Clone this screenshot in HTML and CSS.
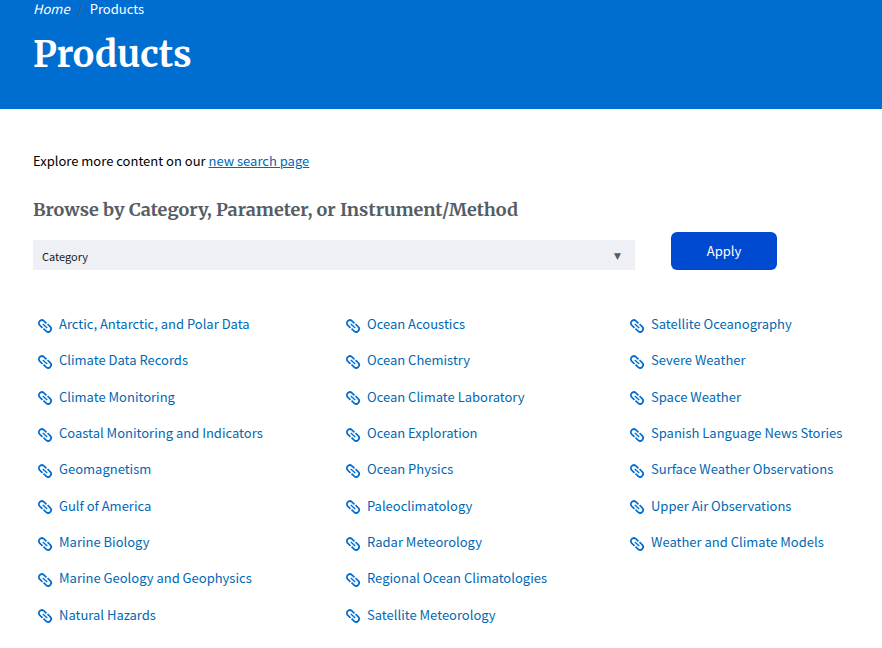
FILE: index.html
```html
<!DOCTYPE html>
<html lang="en">
<head>
<meta charset="utf-8">
<meta name="viewport" content="width=device-width, initial-scale=1">
<title>Products</title>
<link rel="stylesheet" href="styles.css">
</head>
<body>

<!-- link icon, used by every list item -->
<svg class="sprite" aria-hidden="true">
	<symbol id="link" viewBox="0 0 14 14">
		<g transform="rotate(42 7 7)" fill="none" stroke="currentColor" stroke-width="1.7">
			<path d="M6.3 10H2.8A3 3 0 0 1 2.8 4H6.3"/>
			<path d="M7.7 4H11.2A3 3 0 0 1 11.2 10H7.7"/>
			<path d="M4 7H10" stroke-width="1.4"/>
		</g>
	</symbol>
</svg>

<header class="banner">
	<nav class="breadcrumb" aria-label="Breadcrumb">
		<a href="#">Home</a><span class="slash">/</span><span>Products</span>
	</nav>
	<h1>Products</h1>
</header>

<main class="content">
	<p class="explore">Explore more content on our <a href="#">new search page</a></p>

	<h2><label for="browse">Browse by Category, Parameter, or Instrument/Method</label></h2>
	<form class="filter">
		<div class="select">
			<select id="browse">
				<option>Category</option>
				<option>Parameter</option>
				<option>Instrument/Method</option>
			</select>
			<span class="arrow" aria-hidden="true">▼</span>
		</div>
		<button type="button">Apply</button>
	</form>

	<ul class="products">
		<li><svg><use href="#link"/></svg><a href="#">Arctic, Antarctic, and Polar Data</a></li>
		<li><svg><use href="#link"/></svg><a href="#">Climate Data Records</a></li>
		<li><svg><use href="#link"/></svg><a href="#">Climate Monitoring</a></li>
		<li><svg><use href="#link"/></svg><a href="#">Coastal Monitoring and Indicators</a></li>
		<li><svg><use href="#link"/></svg><a href="#">Geomagnetism</a></li>
		<li><svg><use href="#link"/></svg><a href="#">Gulf of America</a></li>
		<li><svg><use href="#link"/></svg><a href="#">Marine Biology</a></li>
		<li><svg><use href="#link"/></svg><a href="#">Marine Geology and Geophysics</a></li>
		<li><svg><use href="#link"/></svg><a href="#">Natural Hazards</a></li>
		<li><svg><use href="#link"/></svg><a href="#">Ocean Acoustics</a></li>
		<li><svg><use href="#link"/></svg><a href="#">Ocean Chemistry</a></li>
		<li><svg><use href="#link"/></svg><a href="#">Ocean Climate Laboratory</a></li>
		<li><svg><use href="#link"/></svg><a href="#">Ocean Exploration</a></li>
		<li><svg><use href="#link"/></svg><a href="#">Ocean Physics</a></li>
		<li><svg><use href="#link"/></svg><a href="#">Paleoclimatology</a></li>
		<li><svg><use href="#link"/></svg><a href="#">Radar Meteorology</a></li>
		<li><svg><use href="#link"/></svg><a href="#">Regional Ocean Climatologies</a></li>
		<li><svg><use href="#link"/></svg><a href="#">Satellite Meteorology</a></li>
		<li><svg><use href="#link"/></svg><a href="#">Satellite Oceanography</a></li>
		<li><svg><use href="#link"/></svg><a href="#">Severe Weather</a></li>
		<li><svg><use href="#link"/></svg><a href="#">Space Weather</a></li>
		<li><svg><use href="#link"/></svg><a href="#">Spanish Language News Stories</a></li>
		<li><svg><use href="#link"/></svg><a href="#">Surface Weather Observations</a></li>
		<li><svg><use href="#link"/></svg><a href="#">Upper Air Observations</a></li>
		<li><svg><use href="#link"/></svg><a href="#">Weather and Climate Models</a></li>
	</ul>
</main>

</body>
</html>
```
FILE: styles.css
```css
*{ box-sizing:border-box; margin:0; padding:0;}
body{ background:#fff; color:#000; font-family:"Source Sans Pro","Noto Sans CJK SC",sans-serif; font-size:13px; line-height:20px;}
a{ color:#0068b3;}
.sprite{ display:none;}

/* banner */
.banner{ background:#006dd1; color:#fff; padding:0 33px 30px;}
.breadcrumb{ line-height:18px;}
.breadcrumb a{ color:#fff; font-style:italic; text-decoration:none;}
.slash{ color:#565c65; margin:0 7px 0 8px;}
h1,h2{ font-family:Merriweather,"Liberation Serif",serif; font-weight:bold;}
h1{ font-size:36px; line-height:48px; margin-top:13px;}

/* content */
.content{ padding:42px 33px 14px;}
h2{ color:#565c65; font-size:18px; line-height:28px; margin-top:25px;}
.filter{ display:flex; align-items:flex-end; gap:36px; margin-top:8px;}
.select{ position:relative; flex:0 1 602px;}
.select select{ display:block; width:100%; height:30px; padding:2px 9px 0; appearance:none; border:0; border-radius:0; background:#eff0f5; color:#1b1b1b; font-family:inherit; font-size:11px;}
.arrow{ position:absolute; right:14px; top:6px; color:#565c65; font-family:"DejaVu Sans",sans-serif; font-size:9px; pointer-events:none;}
.filter button{ width:106px; height:38px; padding-bottom:2px; border:0; border-radius:6px; background:#0049d1; color:#fff; font-family:inherit; font-size:13px;}

.products{ display:grid; grid-template-rows:repeat(9,1fr); grid-template-columns:308fr 284fr 224fr; grid-auto-flow:column; min-height:327px; margin-top:36px; list-style:none;}
.products li{ display:flex; align-items:center; gap:7px; padding-left:5px; white-space:nowrap;}
.products svg{ flex:none; overflow:visible; width:14px; height:14px; margin-top:3px; color:#006dd1;}
.products use{ overflow:visible;}
.products a{ text-decoration:none;}
symbol{ overflow:visible;}
```
